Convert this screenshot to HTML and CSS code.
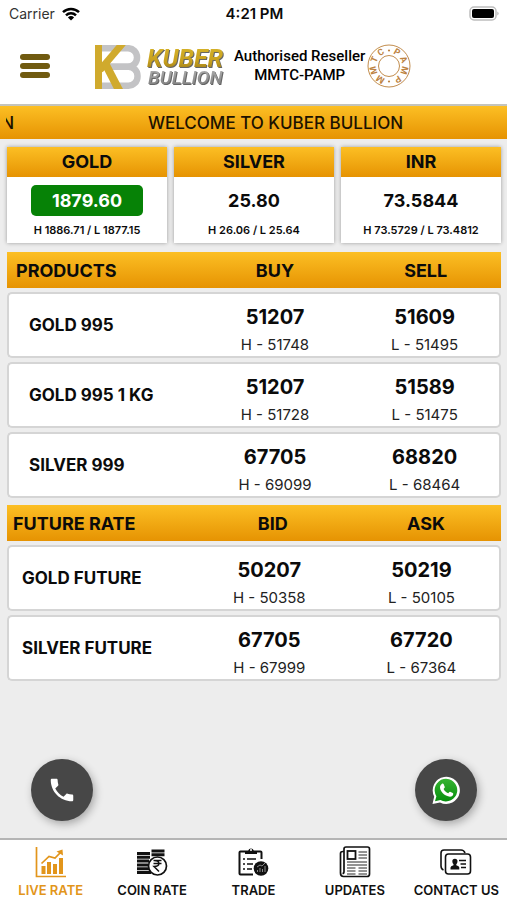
FILE: index.html
```html
<!DOCTYPE html>
<html lang="en">
<head>
<meta charset="utf-8">
<meta name="viewport" content="width=device-width, initial-scale=1">
<title>Kuber Bullion</title>
<link rel="stylesheet" href="styles.css">
</head>
<body>
<div class="status">
  <div class="carrier">Carrier
    <svg width="18" height="14" viewBox="0 0 18 14" fill="none" stroke="#000" stroke-width="2.5"><path d="M1 5.2a11.5 11.5 0 0 1 16 0M4 8.3a7.2 7.2 0 0 1 10 0"/><path d="M9 13.6 5.9 10.5a4.5 4.5 0 0 1 6.2 0z" fill="#000" stroke="none"/></svg>
  </div>
  <div class="clock">4:21 PM</div>
  <div class="battery">
    <svg width="31" height="15" viewBox="0 0 31 15"><rect x="1" y="1" width="26" height="13" rx="4" fill="#fff" stroke="#bdbdbd" stroke-width="1.5"/><rect x="3" y="3" width="22" height="9" rx="2" fill="#000"/><path d="M28.5 5.5q2 2 0 4z" fill="#999"/></svg>
  </div>
</div>
<header class="header">
  <button class="menu" type="button" aria-label="Menu"><span></span><span></span><span></span></button>
  <svg class="logo" width="134" height="50" viewBox="0 0 134 50" role="img" aria-label="Kuber Bullion">
    <defs>
      <linearGradient id="gold" x1="0" y1="0" x2="0" y2="1"><stop offset="0" stop-color="#d9b72c"/><stop offset=".6" stop-color="#c79f1d"/><stop offset="1" stop-color="#8f741b"/></linearGradient>
      <linearGradient id="silver" x1="0" y1="0" x2="0" y2="1"><stop offset="0" stop-color="#b5b5b5"/><stop offset="1" stop-color="#777"/></linearGradient>
      <clipPath id="emblem"><rect x="1" y="4" width="50" height="44"/></clipPath>
    </defs>
    <g clip-path="url(#emblem)" fill="none">
      <g stroke="#c3c3c5" stroke-width="6.5">
        <rect x="-10" y="7.200" width="53" height="18.500" rx="9"/>
        <rect x="-10" y="25.700" width="53.500" height="19" rx="9"/>
      </g>
      <g stroke="#d0aa2d">
        <line x1="4.500" y1="4" x2="4.500" y2="48" stroke-width="7"/>
        <line x1="29" y1="2" x2="6" y2="29" stroke-width="7"/>
        <line x1="11" y1="22" x2="26" y2="51" stroke-width="8"/>
      </g>
    </g>
    <g class="brand">
      <text class="brand-top" x="53" y="26" fill="url(#gold)">KUBER</text>
      <text class="brand-bottom" x="54" y="43" fill="url(#silver)">BULLION</text>
    </g>
  </svg>
  <p class="reseller">Authorised Reseller<br>MMTC-PAMP</p>
  <svg class="seal" width="44" height="44" viewBox="-22 -22 44 44" role="img" aria-label="MMTC PAMP">
    <g fill="none" stroke="#c28d4e"><circle r="21"/><circle r="10.5"/></g>
    <g class="seal-text" text-anchor="middle" fill="#bd8342">
      <circle cy="-15.5" r="1.1"/><circle cy="15.5" r="1.1"/>
      <text y="-13" transform="rotate(30)">P</text>
      <text y="-13" transform="rotate(66)">A</text>
      <text y="-13" transform="rotate(106)">M</text>
      <text y="-13" transform="rotate(147)">P</text>
      <text y="-13" transform="rotate(213)">M</text>
      <text y="-13" transform="rotate(254)">M</text>
      <text y="-13" transform="rotate(294)">T</text>
      <text y="-13" transform="rotate(329)">C</text>
    </g>
  </svg>
</header>
<div class="ticker"><span class="ticker-tail">N</span><span class="ticker-text">WELCOME TO KUBER BULLION</span></div>
<main class="main">
  <div class="spots">
    <section class="spot"><h2>GOLD</h2><p class="price up">1879.60</p><p class="range">H 1886.71 / L 1877.15</p></section>
    <section class="spot"><h2>SILVER</h2><p class="price">25.80</p><p class="range">H 26.06 / L 25.64</p></section>
    <section class="spot"><h2>INR</h2><p class="price">73.5844</p><p class="range">H 73.5729 / L 73.4812</p></section>
  </div>
  <table class="rates">
    <thead><tr><th>PRODUCTS</th><th>BUY</th><th>SELL</th></tr></thead>
    <tbody>
      <tr><td>GOLD 995</td><td><b>51207</b><small>H - 51748</small></td><td><b>51609</b><small>L - 51495</small></td></tr>
      <tr><td>GOLD 995 1 KG</td><td><b>51207</b><small>H - 51728</small></td><td><b>51589</b><small>L - 51475</small></td></tr>
      <tr><td>SILVER 999</td><td><b>67705</b><small>H - 69099</small></td><td><b>68820</b><small>L - 68464</small></td></tr>
    </tbody>
  </table>
  <table class="rates future">
    <thead><tr><th>FUTURE RATE</th><th>BID</th><th>ASK</th></tr></thead>
    <tbody>
      <tr><td>GOLD FUTURE</td><td><b>50207</b><small>H - 50358</small></td><td><b>50219</b><small>L - 50105</small></td></tr>
      <tr><td>SILVER FUTURE</td><td><b>67705</b><small>H - 67999</small></td><td><b>67720</b><small>L - 67364</small></td></tr>
    </tbody>
  </table>
  <div class="actions">
    <button class="fab" type="button" aria-label="Call">
      <svg width="30" height="30" viewBox="0 0 24 24" fill="#fff"><path d="M6.62 10.79c1.44 2.83 3.76 5.14 6.59 6.59l2.2-2.2c.27-.27.67-.36 1.02-.24 1.12.37 2.33.57 3.57.57.55 0 1 .45 1 1V20c0 .55-.45 1-1 1C10.61 21 3 13.39 3 4c0-.55.45-1 1-1h3.5c.55 0 1 .45 1 1 0 1.25.2 2.45.57 3.57.11.35.03.74-.25 1.02z"/></svg>
    </button>
    <button class="fab" type="button" aria-label="WhatsApp">
      <svg width="30" height="30" viewBox="0 0 30 30"><defs><linearGradient id="wa" x1="0" y1="0" x2="0" y2="1"><stop offset="0" stop-color="#36b332"/><stop offset="1" stop-color="#078f0d"/></linearGradient></defs><path d="M1.500 29 3.200 21.600A13.600 13.600 0 1 1 9 27.400z" fill="#fff"/><path d="M4 26.300 5.400 21.200A11.300 11.300 0 1 1 9.400 25z" fill="url(#wa)"/><path d="M11 8.700c.5-.3 1.300-.2 1.600.4l1.200 2.800c.2.5-.9 1.600-1.200 2 1 2 2.500 3.400 4.600 4.300.5-.4 1.300-1.700 1.900-1.500l2.700 1.300c.9.5.3 2.300-.5 3-1.600 1.300-4 .8-6.300-.4-2.500-1.300-4.700-3.800-5.600-6.200-.8-2.200-.5-4.400 1.600-5.700z" fill="#fff"/></svg>
    </button>
  </div>
</main>
<nav class="tabs">
  <a class="tab active" href="#live">
    <svg width="32" height="32" viewBox="0 0 32 32" fill="none" stroke="currentColor"><path d="M1.500 1v29.500H31" stroke-width="1.700"/><path d="M8.500 28v-8M14 28V16M20 28v-10M26 28V12" stroke-width="4"/><path d="M6.500 17.500 14 10.500l6 1.500 6-6" stroke-width="1.700"/><path d="M21.500 5.500 27.500 3.500 28 9.500z" fill="currentColor" stroke="none"/></svg>
    LIVE RATE</a>
  <a class="tab" href="#coin">
    <svg width="32" height="32" viewBox="0 0 32 32" fill="none" stroke="currentColor"><path d="M1 7.500h13M1 11.300h13M1 15.100h12M1 18.900h11M1 22.700h12M1 26.500h14M15.500 5h13M15.500 8.700h13" stroke-width="3"/><circle cx="21.500" cy="20" r="9" fill="#fff" stroke-width="1.700"/><path d="M17.500 14.500h8M17.500 17.500h8M18 14.500c6.500 0 6.500 6 0 6l5 5" stroke-width="1.500"/></svg>
    COIN RATE</a>
  <a class="tab" href="#trade">
    <svg width="32" height="32" viewBox="0 0 32 32" fill="none" stroke="currentColor"><path d="M8 5.500H3.500q-1 0-1 1V27.500q0 1 1 1H16M20 5.500h3.500q1 0 1 1V13" stroke-width="2"/><path d="M8 8V4.500h3.200a3 3 0 0 1 5.600 0H20V8z" fill="currentColor" stroke="none"/><circle cx="14" cy="4" r="1" fill="#fff" stroke="none"/><path d="M6 13h2M10 13h9M6 18h2M10 18h6M6 23h2M10 23h5" stroke-width="1.700"/><circle cx="24" cy="22.500" r="7.300" fill="currentColor" stroke="none"/><path d="M20.500 26v-2M23 26v-4M25.500 26v-3M28 26v-6M20 21l3-2 2 1 3-3" stroke="#aaa" stroke-width=".8"/></svg>
    TRADE</a>
  <a class="tab" href="#updates">
    <svg width="32" height="32" viewBox="0 0 32 32" fill="none" stroke="currentColor"><path d="M5 5.500H4q-2.500 0-2.500 2V27q0 3.500 3 3.500H28q2.500 0 2.500-2.500V3q0-2-2-2H7Q5 1 5 3v22.500q0 2-1.500 2" stroke-width="1.700"/><rect x="8.500" y="5" width="8" height="8" stroke-width="1.800"/><path d="M19.500 6H28M19.500 9H28M19.500 12H28M8 16h20M8 19h20M8 22h8.500M19.500 22H28M8 25h8.500M19.500 25H28M8 28h8.500M19.500 28H28" stroke-width=".9"/></svg>
    UPDATES</a>
  <a class="tab" href="#contact">
    <svg width="32" height="32" viewBox="0 0 32 32" fill="none" stroke="currentColor" stroke-width="1.600"><path d="M3.500 24Q1 23 1 20V7q0-3 3-3h17q3 0 4 3"/><rect x="5.500" y="8" width="25" height="20" rx="3"/><path d="M10.500 23.500v-2q0-1.500 3-2.200v-1q-1.200-1-1.200-3 0-2.600 2.600-2.600t2.600 2.600q0 2-1.200 3v1q3 .7 3 2.200v2z" fill="currentColor" stroke="none"/><path d="M19 14.500h7M20.500 18h5.500M21 21.500h5" stroke-width="1.500"/></svg>
    CONTACT US</a>
</nav>
</body>
</html>
```
FILE: styles.css
```css
* { box-sizing: border-box; }

body {
  margin: 0;
  min-height: 100vh;
  display: flex;
  flex-direction: column;
  background: #ededed;
  color: #0b0b0b;
  font-family: Inter, "Liberation Sans", sans-serif;
}

h2, p { margin: 0; }

button { border: 0; padding: 0; cursor: pointer; }

.status {
  display: grid;
  grid-template-columns: 1fr auto 1fr;
  align-items: center;
  height: 27px;
  padding: 0 7px 0 9px;
  background: #fff;
  font-size: 14px;
}

.carrier { display: flex; align-items: center; gap: 7px; color: #333; }

.clock { font-size: 15px; font-weight: 600; }

.battery { display: flex; justify-content: flex-end; }

.header {
  display: flex;
  align-items: center;
  height: 79px;
  padding: 0 20px;
  background: #fff;
  border-bottom: 2px solid #c4c4bc;
}

.menu {
  display: flex;
  flex-direction: column;
  gap: 3px;
  width: 30px;
  background: none;
}

.menu span { height: 6px; border-radius: 3px; background: #705a10; }

.logo { margin-left: 44px; flex: none; }

.brand { font-family: Roboto, sans-serif; font-style: italic; filter: drop-shadow(1px 1px 0 #666); }

.brand-top { font-size: 25px; font-weight: 700; }

.brand-bottom { font-size: 19px; font-weight: 500; }

.reseller {
  margin-left: 6px;
  color: #000;
  font: 500 15px/19px Roboto, sans-serif;
  text-align: center;
  white-space: nowrap;
}

.seal { flex: none; margin-left: 2px; }

.seal-text { font: 700 9px Roboto, sans-serif; }

.ticker, .spot h2, .rates th { background: linear-gradient(#fcbf24, #e69302); }

.ticker {
  display: flex;
  align-items: center;
  height: 33px;
  padding: 0 6px;
  color: #1c1200;
  font-size: 17px;
  font-weight: 500;
  white-space: nowrap;
}

.ticker-tail {
  display: flex;
  justify-content: flex-end;
  width: 8px;
  overflow: hidden;
}

.ticker-text { flex: 1; padding-left: 36px; text-align: center; }

.main {
  flex: 1;
  display: flex;
  flex-direction: column;
  padding: 8px 6px 17px 7px;
}

.spots { display: grid; grid-template-columns: repeat(3, 1fr); gap: 7px; }

.spot {
  height: 96px;
  background: #fff;
  box-shadow: 0 0 4px rgba(0, 0, 0, .35);
  text-align: center;
}

.spot h2 { font-size: 18px; line-height: 30px; font-weight: 700; }

.price {
  width: 112px;
  margin: 8px auto;
  border-radius: 5px;
  font-size: 18px;
  line-height: 31px;
  font-weight: 700;
}

.up { background: #068206; color: #fff; }

.range { font-size: 11px; line-height: 12px; font-weight: 600; }

.rates {
  width: 100%;
  margin-top: 5px;
  border-collapse: separate;
  border-spacing: 0 4px;
  table-layout: fixed;
}

.rates.future { margin-top: -1px; }

.rates th {
  height: 36px;
  padding: 0;
  font-size: 18px;
  font-weight: 700;
}

.rates th:first-child { width: 39%; padding-left: 9px; text-align: left; }

.rates td {
  height: 66px;
  padding: 0;
  background: #fff;
  border: solid #d5d5d5;
  border-width: 2px 0;
  text-align: center;
}

.rates td:first-child {
  padding-left: 20px;
  border-left-width: 2px;
  border-radius: 5px 0 0 5px;
  font-size: 17px;
  font-weight: 700;
  text-align: left;
}

.rates td:last-child { border-right-width: 2px; border-radius: 0 5px 5px 0; }

.rates b { display: block; padding-top: 6px; font-size: 20px; line-height: 34px; font-weight: 700; }

.rates small { display: block; font-size: 15px; line-height: 22px; color: #222; }

.rates.future th:first-child { width: 38%; padding-left: 6px; }

.future th + th { padding-left: 3px; }

.rates.future td:first-child { padding-left: 13px; }

.rates.future td + td { padding-right: 4px; }

.actions {
  display: flex;
  justify-content: space-between;
  margin-top: auto;
  padding: 0 24px;
}

.fab {
  display: grid;
  place-items: center;
  width: 62px;
  height: 62px;
  border-radius: 50%;
  background: #474747;
  box-shadow: 2px 3px 9px rgba(0, 0, 0, .3);
}

.tabs {
  display: grid;
  grid-template-columns: repeat(5, 1fr);
  height: 62px;
  border-top: 2px solid #b5b5b5;
  background: #fff;
}

.tab {
  display: flex;
  flex-direction: column;
  align-items: center;
  padding-top: 6px;
  color: #111;
  font-size: 13px;
  line-height: 24px;
  font-weight: 600;
  text-decoration: none;
  white-space: nowrap;
}

.tab.active { color: #e2951b; }
```
